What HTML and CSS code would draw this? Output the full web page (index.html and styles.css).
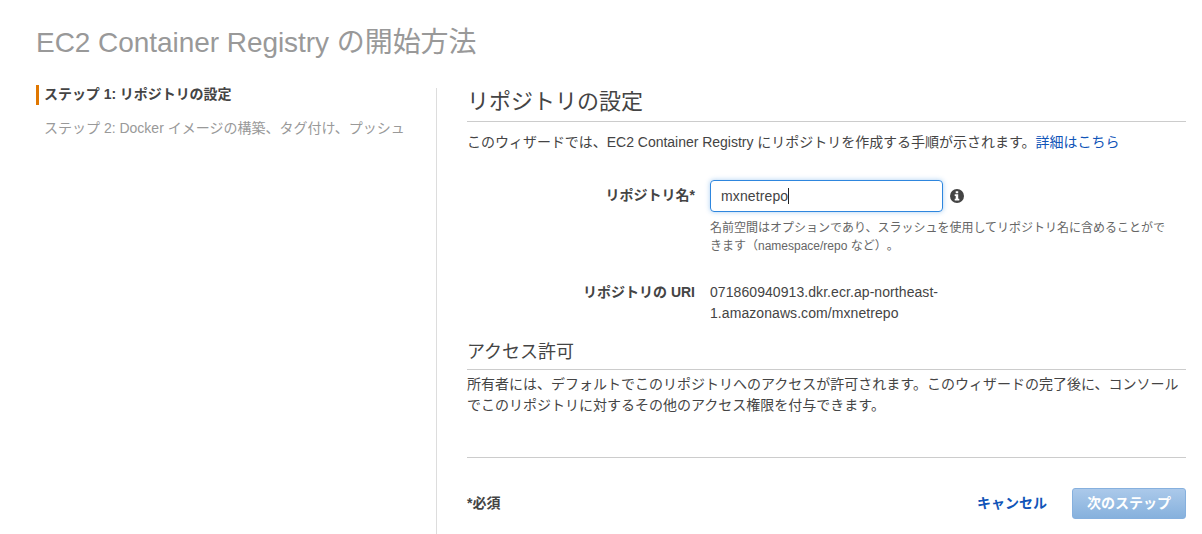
FILE: index.html
```
<!DOCTYPE html>
<html lang="ja">
<head>
    <meta charset="UTF-8">
    <meta name="viewport" content="width=device-width, initial-scale=1.0">
    <title>EC2 Container Registry の開始方法</title>
    <link rel="stylesheet" href="styles.css">
</head>
<body>
    <h1 class="page-title">EC2 Container Registry の開始方法</h1>

    <div class="wizard">
        <ul class="steps">
            <li class="step active">ステップ 1: リポジトリの設定</li>
            <li class="step">ステップ 2: Docker イメージの構築、タグ付け、プッシュ</li>
        </ul>

        <div class="content">
            <h2>リポジトリの設定</h2>
            <p class="intro">このウィザードでは、EC2 Container Registry にリポジトリを作成する手順が示されます。<a href="#">詳細はこちら</a></p>

            <div class="form-row name-row">
                <div class="label">リポジトリ名*</div>
                <div class="field">
                    <div class="input-line">
                        <div class="input" role="textbox" tabindex="0"><span class="input-value">mxnetrepo</span></div>
                        <svg class="info" width="14" height="14" viewBox="0 0 14 14">
                            <circle cx="7" cy="7" r="7" fill="#444"/>
                            <path d="M5.7 2.2h2.5v2H5.7zM4.7 5.3h3.5v4.5h1.1v1.7H4.7V9.8h1V7h-1z" fill="#fff"/>
                        </svg>
                    </div>
                    <p class="hint">名前空間はオプションであり、スラッシュを使用してリポジトリ名に含めることができます（namespace/repo など）。</p>
                </div>
            </div>

            <div class="form-row uri-row">
                <div class="label">リポジトリの URI</div>
                <div class="field uri">071860940913.dkr.ecr.ap-northeast-<br>1.amazonaws.com/mxnetrepo</div>
            </div>

            <h3>アクセス許可</h3>
            <p class="access">所有者には、デフォルトでこのリポジトリへのアクセスが許可されます。このウィザードの完了後に、コンソールでこのリポジトリに対するその他のアクセス権限を付与できます。</p>

            <div class="footer">
                <span class="required">*必須</span>
                <a class="cancel" href="#">キャンセル</a>
                <button class="next-button">次のステップ</button>
            </div>
        </div>
    </div>
</body>
</html>
```
FILE: styles.css
```
* {
    box-sizing: border-box;
}
body {
    margin: 0;
    height: 534px;
    overflow: hidden;
    display: flex;
    flex-direction: column;
    background-color: #fff;
    color: #444;
    font-family: "Liberation Sans", "Noto Sans CJK JP", sans-serif;
    font-size: 14px;
    line-height: 21px;
    text-spacing-trim: space-all;
}
h1, h2, h3, p, ul {
    margin: 0;
    padding: 0;
    font-weight: normal;
}
a {
    color: #1155b8;
    text-decoration: none;
}
.page-title {
    padding: 22px 0 0 36px;
    height: 88px;
    font-size: 28px;
    line-height: 41px;
    letter-spacing: -0.05px;
    color: #999;
}
.wizard {
    flex: 1;
    display: flex;
}
.steps {
    width: 436px;
    padding-left: 36px;
    margin-top: -3px;
    list-style: none;
    white-space: nowrap;
}
.step {
    height: 20px;
    line-height: 19px;
    margin-bottom: 14px;
    padding-left: 5px;
    border-left: 3px solid transparent;
    color: #999;
}
.step.active {
    border-left-color: #e07700;
    color: #444;
    font-weight: bold;
    letter-spacing: -0.05px;
}
.content {
    flex: 1;
    padding: 0 16px 0 30px;
    border-left: 1px solid #ddd;
}
h2 {
    height: 34px;
    font-size: 22px;
    line-height: 28px;
    border-bottom: 1px solid #ccc;
}
.intro {
    margin-top: 10px;
    letter-spacing: -0.02px;
    white-space: nowrap;
}
.form-row {
    display: flex;
    gap: 15px;
}
.name-row {
    margin-top: 27px;
}
.label {
    width: 228px;
    text-align: right;
    font-weight: bold;
}
.name-row .label {
    line-height: 31px;
}
.field {
    width: 462px;
}
.input-line {
    display: flex;
    align-items: center;
    gap: 7px;
}
.input {
    width: 233px;
    height: 32px;
    padding: 0 10px;
    line-height: 31px;
    letter-spacing: 0.12px;
    border: 1px solid #2e86de;
    border-radius: 4px;
    box-shadow: 0 0 5px rgba(46, 134, 222, 0.4);
}
.info {
    margin-bottom: 1px;
}
/* text cursor */
.input-value {
    border-right: 1px solid #222;
}
.hint {
    margin-top: 7px;
    font-size: 12px;
    line-height: 18px;
    color: #666;
}
.uri-row {
    margin-top: 27px;
}
.uri {
    letter-spacing: 0.07px;
}
h3 {
    height: 32px;
    margin-top: 14px;
    font-size: 18px;
    line-height: 29px;
    border-bottom: 1px solid #ccc;
}
.access {
    margin-top: 4px;
}
.footer {
    display: flex;
    align-items: center;
    margin-top: 41px;
    padding-top: 30px;
    border-top: 1px solid #ccc;
    font-weight: bold;
}
.required {
    flex: 1;
}
.next-button {
    width: 114px;
    height: 31px;
    margin-left: 25px;
    padding: 0;
    border: 1px solid #86b0de;
    border-radius: 3px;
    background: linear-gradient(#abc9ea, #86b1dd);
    color: #fff;
    font: inherit;
}
```
